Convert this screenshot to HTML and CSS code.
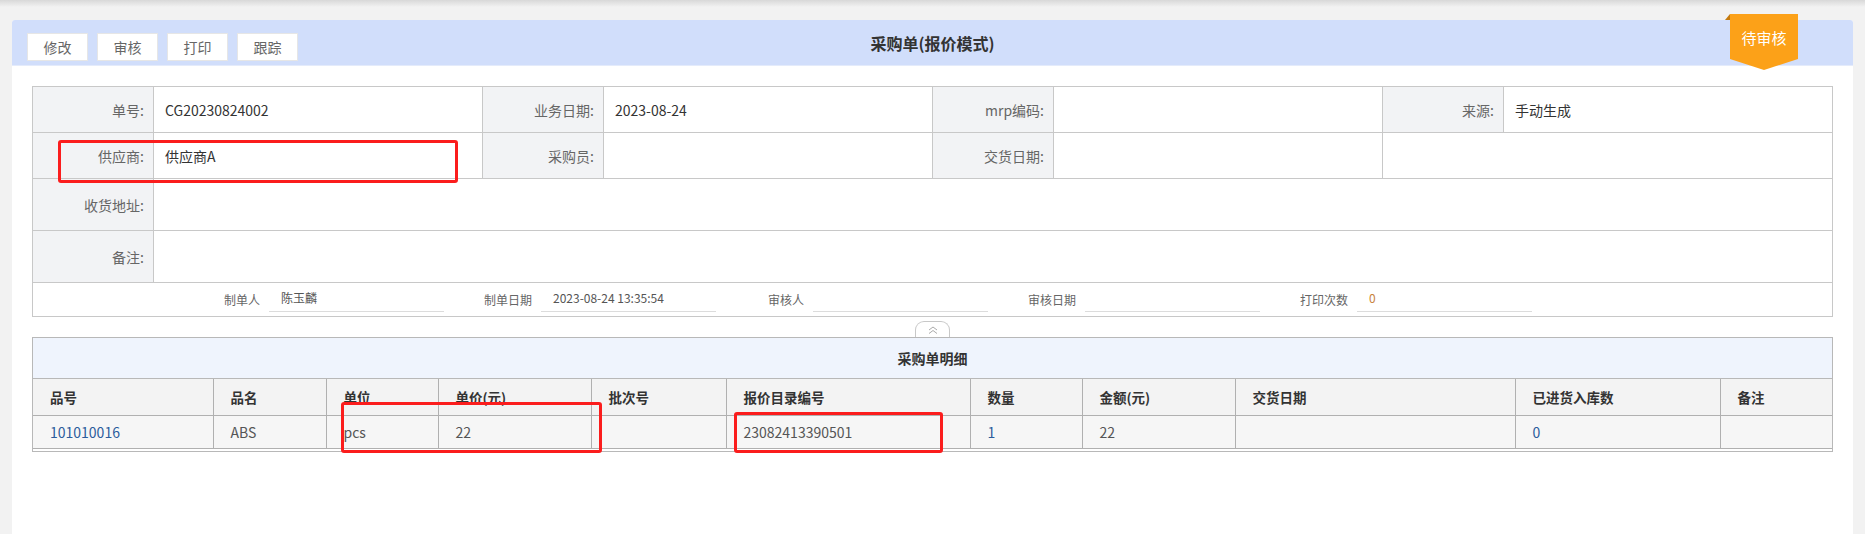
FILE: index.html
```html
<!DOCTYPE html>
<html lang="zh-CN">
<head>
    <meta charset="UTF-8">
    <title>采购单(报价模式)</title>
    <link rel="stylesheet" href="styles.css">
</head>
<body>
    <div class="topbar"></div>
    <div class="panel">
        <div class="panel-head">
            <div class="tools">
                <button class="btn">修改</button>
                <button class="btn">审核</button>
                <button class="btn">打印</button>
                <button class="btn">跟踪</button>
            </div>
            <div class="title">采购单(报价模式)</div>
            <div></div>
        </div>
        <div class="badge"><div class="badge-body">待审核</div></div>

        <div class="panel-body">
            <table class="info">
                <colgroup>
                    <col class="c-l"><col><col class="c-l"><col><col class="c-l"><col><col class="c-l"><col>
                </colgroup>
                <tr>
                    <td class="lbl">单号:</td><td>CG20230824002</td>
                    <td class="lbl">业务日期:</td><td>2023-08-24</td>
                    <td class="lbl">mrp编码:</td><td></td>
                    <td class="lbl">来源:</td><td>手动生成</td>
                </tr>
                <tr>
                    <td class="lbl">供应商:</td><td>供应商A</td>
                    <td class="lbl">采购员:</td><td></td>
                    <td class="lbl">交货日期:</td><td></td>
                    <td colspan="2"></td>
                </tr>
                <tr class="tall">
                    <td class="lbl">收货地址:</td><td colspan="7"></td>
                </tr>
                <tr class="tall">
                    <td class="lbl">备注:</td><td colspan="7"></td>
                </tr>
                <tr class="meta">
                    <td colspan="8">
                        <div class="meta-row">
                            <div class="meta-item"><span class="meta-label">制单人</span><span class="meta-val">陈玉麟</span></div>
                            <div class="meta-item"><span class="meta-label">制单日期</span><span class="meta-val">2023-08-24 13:35:54</span></div>
                            <div class="meta-item"><span class="meta-label">审核人</span><span class="meta-val"></span></div>
                            <div class="meta-item"><span class="meta-label">审核日期</span><span class="meta-val"></span></div>
                            <div class="meta-item"><span class="meta-label">打印次数</span><span class="meta-val num">0</span></div>
                        </div>
                    </td>
                </tr>
            </table>

            <div class="fold">
                <span class="fold-tab">
                    <svg width="10" height="8" viewBox="0 0 10 8"><polyline points="1,4 5,1 9,4" fill="none" stroke="#aaa" stroke-width="1"/><polyline points="1,7.5 5,4.5 9,7.5" fill="none" stroke="#aaa" stroke-width="1"/></svg>
                </span>
            </div>

            <div class="detail">
                <div class="detail-title">采购单明细</div>
                <table class="grid">
                    <colgroup>
                        <col style="width:180px"><col style="width:113px"><col style="width:112px"><col style="width:153px">
                        <col style="width:135px"><col style="width:244px"><col style="width:112px"><col style="width:153px">
                        <col style="width:280px"><col style="width:205px"><col>
                    </colgroup>
                    <tr>
                        <th>品号</th><th>品名</th><th>单位</th><th>单价(元)</th><th>批次号</th><th>报价目录编号</th>
                        <th>数量</th><th>金额(元)</th><th>交货日期</th><th>已进货入库数</th><th>备注</th>
                    </tr>
                    <tr>
                        <td class="link">101010016</td><td>ABS</td><td>pcs</td><td>22</td><td></td><td>23082413390501</td>
                        <td class="link">1</td><td>22</td><td></td><td class="link">0</td><td></td>
                    </tr>
                </table>
            </div>
        </div>

        <div class="mark mark-supplier"></div>
        <div class="mark mark-price"></div>
        <div class="mark mark-code"></div>
    </div>
</body>
</html>
```

FILE: styles.css
```css
* { box-sizing: border-box; }
body { margin: 0; background: #f2f2f2; font-family: "Noto Sans CJK SC", "Noto Sans", sans-serif; font-size: 14px; color: #333; }
.topbar { height: 20px; background: linear-gradient(#d8d8d8, #f2f2f2 7px); }

.panel { position: relative; margin: 0 12px; height: 514px; background: #fff; border-radius: 3px 3px 0 0; }
.panel-head { height: 46px; background: #d1defb; border-radius: 3px 3px 0 0; border-bottom: 1px solid #e4ebfb; display: grid; grid-template-columns: 1fr auto 1fr; align-items: center; }
.tools { display: flex; gap: 9px; padding-left: 15px; margin-top: 8px; }
.btn { width: 61px; height: 28px; padding: 0; background: #fff; border: 1px solid #e6e6e6; color: #666; font-family: inherit; font-size: 14px; }
.title { font-size: 16px; font-weight: bold; color: #333; }

.badge { position: absolute; top: -6px; right: 55px; }
.badge::before { content: ""; position: absolute; left: -5px; top: 0; width: 0; height: 0; border-bottom: 6px solid #c57a0c; border-left: 5px solid transparent; }
.badge-body { width: 68px; height: 56px; padding-top: 13px; background: #fca118; color: #fff; font-size: 15px; text-align: center; clip-path: polygon(0 0, 100% 0, 100% 45px, 50% 56px, 0 45px); }

.panel-body { padding: 20px 20px 0; }

.info { width: 100%; border-collapse: collapse; table-layout: fixed; }
.info .c-l { width: 121px; }
.info td { height: 46px; padding: 0 11px; border: 1px solid #c8c8c8; }
.info .lbl { background: #f2f3f5; color: #666; text-align: right; padding-right: 9px; }
.info .tall td { height: 52px; }
.info .meta td { height: 34px; padding: 5px 0 0 139px; vertical-align: top; }
.meta-row { display: flex; }
.meta-item { display: flex; align-items: flex-start; }
.meta-label { width: 88px; margin-right: 9px; line-height: 24px; text-align: right; font-size: 12px; color: #666; }
.meta-val { width: 175px; height: 24px; padding-left: 12px; line-height: 20px; font-size: 12px; color: #555; border-bottom: 1px solid #dcdcdc; }
.meta-val.num { color: #c8823c; }

.fold { height: 20px; display: flex; justify-content: center; align-items: flex-end; }
.fold-tab { width: 35px; height: 16px; display: flex; justify-content: center; align-items: center; border: 1px solid #c8c8c8; border-bottom: 0; border-radius: 9px 9px 0 0; background: #fff; }

.detail { border: 1px solid #b8b8b8; padding-bottom: 2px; }
.detail-title { height: 41px; line-height: 40px; text-align: center; font-weight: bold; background: #eff4fd; border-bottom: 1px solid #b8b8b8; }
.grid { width: 100%; border-collapse: collapse; table-layout: fixed; }
.grid th, .grid td { padding: 0 0 0 17px; text-align: left; border: 1px solid #b0b0b0; }
.grid tr:first-child th { border-top: 0; }
.grid th:first-child, .grid td:first-child { border-left: 0; }
.grid th:last-child, .grid td:last-child { border-right: 0; }
.grid th { height: 36px; background: #f3f3f3; font-size: 13.5px; font-weight: bold; color: #333; }
.grid td { height: 33px; background: #f6f6f6; color: #555; }
.grid td.link { color: #2b5c9c; }

.mark { position: absolute; border: 3px solid #fb1d1d; border-radius: 3px; }
.mark-supplier { left: 46px; top: 120px; width: 400px; height: 43px; }
.mark-price { left: 329px; top: 382px; width: 261px; height: 51px; }
.mark-code { left: 722px; top: 392px; width: 209px; height: 41px; }
```
